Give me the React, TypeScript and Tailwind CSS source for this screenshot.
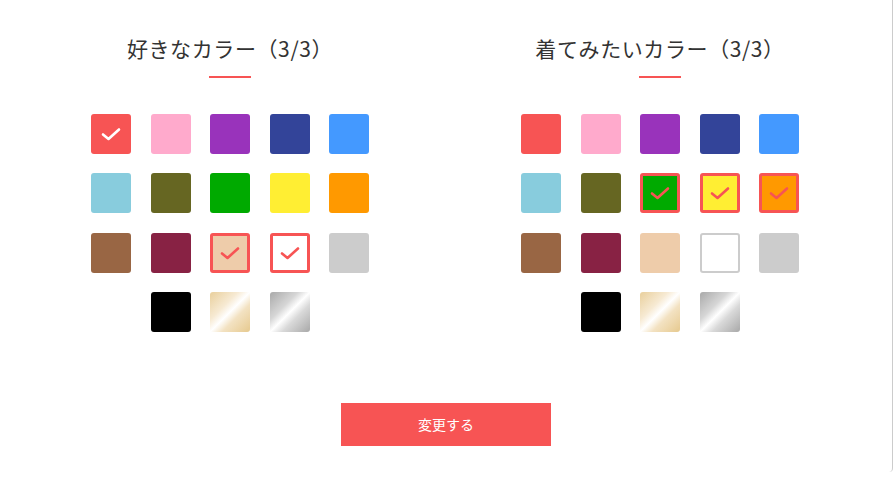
import React from 'react';

type Swatch = {
  name: string;
  bg: string;
  selected?: boolean;
  outline?: boolean;
};

const font = { fontFamily: '"Noto Sans CJK JP", "Noto Sans", sans-serif' };

function Check({ color }: { color: string }) {
  return (
    <svg width="22" height="16" viewBox="0 0 22 16" fill="none">
      <path d="M3 8.5 L8.5 13 L19 3.5" stroke={color} strokeWidth="2.6" strokeLinecap="round" strokeLinejoin="round" />
    </svg>
  );
}

function ColorBox({ s }: { s: Swatch }) {
  // the red swatch shows a white check on itself, the rest get a red frame
  if (s.selected && s.name === 'red') {
    return (
      <div className={`w-10 h-10 rounded-[3px] flex items-center justify-center ${s.bg}`}>
        <Check color="#ffffff" />
      </div>
    );
  }
  if (s.selected) {
    return (
      <div className={`w-10 h-10 rounded-[3px] border-[3px] border-[#f75454] flex items-center justify-center ${s.bg}`}>
        <Check color="#f75454" />
      </div>
    );
  }
  return (
    <div
      className={`w-10 h-10 rounded-[3px] ${s.bg} ${s.outline ? 'border-2 border-[#cccccc]' : ''}`}
    />
  );
}

const baseColors: Swatch[] = [
  { name: 'red', bg: 'bg-[#f75454]' },
  { name: 'pink', bg: 'bg-[#ffaacc]' },
  { name: 'purple', bg: 'bg-[#9933bb]' },
  { name: 'navy', bg: 'bg-[#334499]' },
  { name: 'blue', bg: 'bg-[#4499ff]' },
  { name: 'lightblue', bg: 'bg-[#88ccdd]' },
  { name: 'olive', bg: 'bg-[#666622]' },
  { name: 'green', bg: 'bg-[#00aa00]' },
  { name: 'yellow', bg: 'bg-[#ffee33]' },
  { name: 'orange', bg: 'bg-[#ff9900]' },
  { name: 'brown', bg: 'bg-[#996644]' },
  { name: 'wine', bg: 'bg-[#882244]' },
  { name: 'beige', bg: 'bg-[#eeccaa]' },
  { name: 'white', bg: 'bg-white' },
  { name: 'gray', bg: 'bg-[#cccccc]' },
  { name: 'black', bg: 'bg-black' },
  { name: 'gold', bg: 'bg-[linear-gradient(135deg,#e9cf9c_0%,#f7ead3_35%,#ffffff_50%,#f3e2c2_65%,#e6c98e_100%)]' },
  { name: 'silver', bg: 'bg-[linear-gradient(135deg,#a9a9a9_0%,#d6d6d6_35%,#ffffff_50%,#d9d9d9_65%,#a8a8a8_100%)]' },
];

function withSelection(selected: string[]): Swatch[] {
  return baseColors.map((c) => {
    const isSel = selected.includes(c.name);
    return { ...c, selected: isSel, outline: c.name === 'white' && !isSel };
  });
}

function ColorPicker({ title, selected }: { title: string; selected: string[] }) {
  const colors = withSelection(selected);
  return (
    <div className="w-[430px] flex flex-col items-center">
      <h2 className="text-[21px] leading-[28px] tracking-[0.6px] text-[#333333] mt-[34px] pl-[0px]" style={font}>
        {title}
      </h2>
      <div className="w-[42px] h-[2px] bg-[#f75454] mt-[14px]" />
      <div className="w-[278px] mt-[36px] flex flex-wrap justify-center gap-x-[19.5px] gap-y-[19.3px]">
        {colors.map((c) => (
          <ColorBox key={c.name} s={c} />
        ))}
      </div>
    </div>
  );
}

export default function App() {
  return (
    <div className="w-[893px] h-[472px] bg-white border-r border-[#cccccc] rounded-br-[4px]" style={font}>
      <div className="flex pl-[15px]">
        <ColorPicker title="好きなカラー（3/3）" selected={['red', 'beige', 'white']} />
        <ColorPicker title="着てみたいカラー（3/3）" selected={['green', 'yellow', 'orange']} />
      </div>
      <div className="flex justify-center mt-[71px]">
        <button className="w-[210px] h-[43px] bg-[#f75454] text-white text-[14px]" style={font}>
          変更する
        </button>
      </div>
    </div>
  );
}
